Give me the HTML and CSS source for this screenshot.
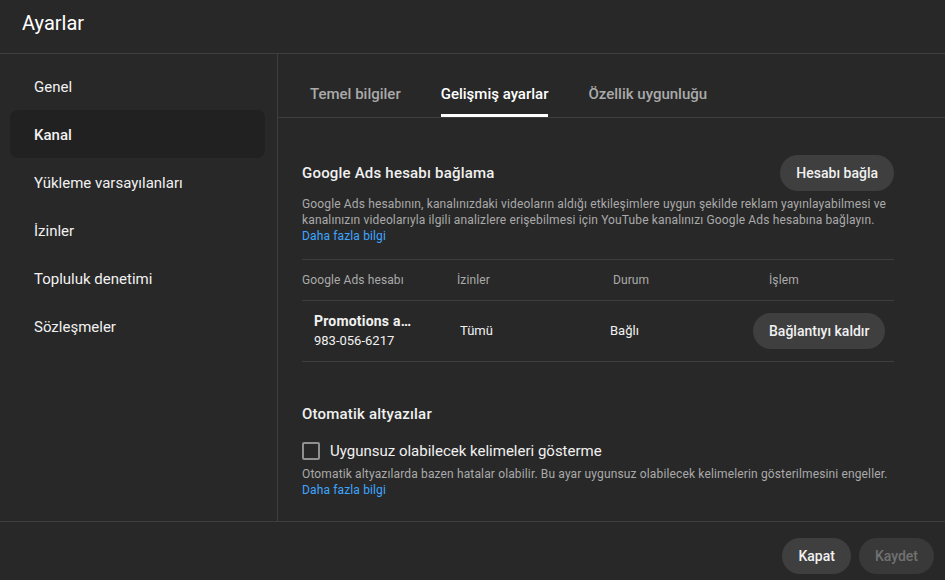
FILE: index.html
```html
<!DOCTYPE html>
<html lang="tr">
<head>
    <meta charset="UTF-8">
    <title>Ayarlar</title>
<link rel="stylesheet" href="styles.css">
</head>
<body>
    <div class="dialog">
        <div class="header">
            <h1 class="title">Ayarlar</h1>
        </div>

        <div class="body">
            <nav class="sidebar">
                <a class="nav-item">Genel</a>
                <a class="nav-item active">Kanal</a>
                <a class="nav-item">Yükleme varsayılanları</a>
                <a class="nav-item">İzinler</a>
                <a class="nav-item">Topluluk denetimi</a>
                <a class="nav-item">Sözleşmeler</a>
            </nav>

            <div class="main">
                <div class="tabs">
                    <div class="tab">Temel bilgiler</div>
                    <div class="tab active">Gelişmiş ayarlar</div>
                    <div class="tab">Özellik uygunluğu</div>
                </div>

                <div class="content">
                    <div class="section-head">
                        <h2 class="section-title">Google Ads hesabı bağlama</h2>
                        <button class="button">Hesabı bağla</button>
                    </div>
                    <p class="desc">Google Ads hesabının, kanalınızdaki videoların aldığı etkileşimlere uygun şekilde reklam yayınlayabilmesi ve kanalınızın videolarıyla ilgili analizlere erişebilmesi için YouTube kanalınızı Google Ads hesabına bağlayın.<br><a class="link" href="#">Daha fazla bilgi</a></p>

                    <div class="table">
                        <div class="table-head">
                            <div>Google Ads hesabı</div>
                            <div>İzinler</div>
                            <div>Durum</div>
                            <div>İşlem</div>
                        </div>
                        <div class="table-row">
                            <div class="account">
                                <div class="account-name">Promotions a…</div>
                                <div>983-056-6217</div>
                            </div>
                            <div>Tümü</div>
                            <div>Bağlı</div>
                            <div><button class="button">Bağlantıyı kaldır</button></div>
                        </div>
                    </div>

                    <h2 class="section-title captions">Otomatik altyazılar</h2>
                    <label class="check">
                        <span class="box"></span>
                        Uygunsuz olabilecek kelimeleri gösterme
                    </label>
                    <p class="desc">Otomatik altyazılarda bazen hatalar olabilir. Bu ayar uygunsuz olabilecek kelimelerin gösterilmesini engeller.<br><a class="link" href="#">Daha fazla bilgi</a></p>
                </div>
            </div>
        </div>

        <div class="footer">
            <button class="button">Kapat</button>
            <button class="button disabled">Kaydet</button>
        </div>
    </div>
</body>
</html>
```

FILE: styles.css
```css
* {
    box-sizing: border-box;
}

body, button {
    font-family: Roboto, "Noto Sans", sans-serif;
}

body {
    margin: 0;
    background-color: #282828;
    color: #f1f1f1;
}

.dialog {
    width: 945px;
    height: 580px;
    display: flex;
    flex-direction: column;
    background-color: #282828;
}

.header {
    height: 54px;
    padding: 9px 22px 0;
    border-bottom: 1px solid #3e3e3e;
}

.title {
    margin: 0;
    font-size: 20px;
    font-weight: 400;
    line-height: 28px;
    color: #fff;
}

.body {
    display: flex;
    height: 467px;
}

.sidebar {
    width: 278px;
    padding-top: 8px;
    border-right: 1px solid #3e3e3e;
    display: flex;
    flex-direction: column;
}

.nav-item {
    display: block;
    height: 48px;
    line-height: 50px;
    margin: 0 12px 0 10px;
    padding-left: 24px;
    border-radius: 8px;
    font-size: 15px;
    color: #f1f1f1;
}

.nav-item.active {
    background-color: #212121;
    font-weight: 500;
}

.main {
    flex: 1;
    display: flex;
    flex-direction: column;
}

.tabs {
    height: 64px;
    display: flex;
    align-items: flex-end;
    gap: 40px;
    padding-left: 32px;
    border-bottom: 1px solid #3e3e3e;
}

.tab {
    height: 48px;
    line-height: 50px;
    font-size: 15px;
    font-weight: 500;
    color: #aaa;
}

.tab.active {
    color: #fff;
    box-shadow: inset 0 -3px 0 #fff;
}

.content {
    padding: 37px 51px 0 24px;
}

.section-head {
    display: flex;
    justify-content: space-between;
    align-items: center;
}

.section-title {
    margin: 0;
    font-size: 15px;
    font-weight: 500;
    line-height: 20px;
    letter-spacing: 0.2px;
    color: #f1f1f1;
}

.button {
    height: 36px;
    padding: 0 16px;
    border: 0;
    border-radius: 18px;
    background-color: #3f3f3f;
    color: #f1f1f1;
    font-size: 14px;
    font-weight: 500;
    cursor: pointer;
}

.button.disabled {
    background-color: #393939;
    color: #717171;
}

.desc {
    margin: 5px 0 0;
    font-size: 12px;
    line-height: 16px;
    letter-spacing: 0.14px;
    color: #aaa;
}

.link {
    color: #3ea6ff;
    text-decoration: none;
}

.table {
    margin-top: 15px;
    border-top: 1px solid #3e3e3e;
}

.table-head {
    display: grid;
    grid-template-columns: 155px 156px 156px auto;
    height: 41px;
    align-items: center;
    font-size: 12px;
    letter-spacing: 0.1px;
    color: #aaa;
    border-bottom: 1px solid #3e3e3e;
}

.table-row {
    display: grid;
    grid-template-columns: 146px 150px 143px auto;
    height: 61px;
    align-items: center;
    padding-left: 12px;
    font-size: 13px;
    line-height: 20px;
    border-bottom: 1px solid #3e3e3e;
}

.account-name {
    font-size: 14px;
    font-weight: 700;
    letter-spacing: 0.2px;
    white-space: nowrap;
}

.captions {
    margin-top: 42px;
}

.check {
    display: flex;
    align-items: center;
    gap: 10px;
    margin-top: 17px;
    font-size: 15px;
    line-height: 20px;
}

.box {
    width: 18px;
    height: 18px;
    border: 2px solid #909090;
    border-radius: 2px;
}

.check + .desc {
    margin-top: 5px;
}

.footer {
    flex: 1;
    display: flex;
    justify-content: flex-end;
    gap: 8px;
    padding: 16px 11px 0 0;
    border-top: 1px solid #3e3e3e;
}
```
